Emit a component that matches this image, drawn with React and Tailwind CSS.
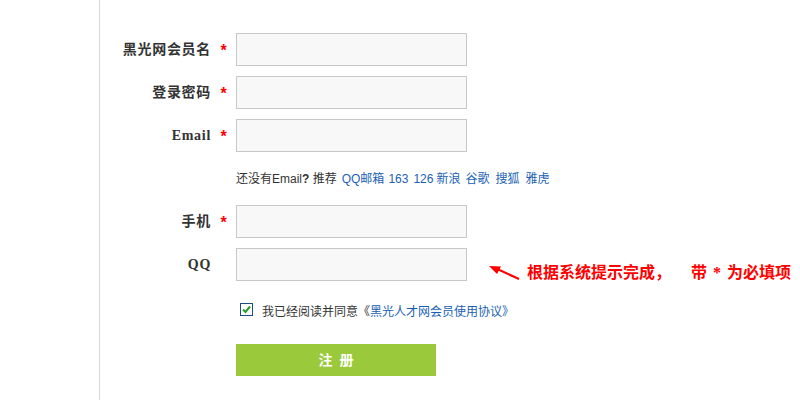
import React from "react";

const labelFont = { fontFamily: '"Liberation Serif", "Noto Sans CJK SC", serif' };

const Row = ({ label, required, children }) => (
  <div className="flex items-center h-[33px]">
    <div
      className="w-[111px] text-right text-[14px] font-bold text-[#333] tracking-[0.7px]"
      style={labelFont}
    >
      {label}
    </div>
    <div className="w-[25px] text-center text-[16px] font-bold text-[#f00] pt-[3px]">
      {required ? "*" : ""}
    </div>
    <input
      type="text"
      className="w-[231px] h-[33px] border border-[#c8c8c8] bg-[#f8f8f8] outline-none"
    />
    {children}
  </div>
);

const links = [
  ["QQ邮箱", "ml-[5px]"],
  ["163", "ml-[4px]"],
  ["126", "ml-[5px]"],
  ["新浪", "ml-[3px]"],
  ["谷歌", "ml-[5px]"],
  ["搜狐", "ml-[6px]"],
  ["雅虎", "ml-[6px]"],
];

export default function App() {
  return (
    <div
      className="w-[800px] h-[400px] bg-white flex overflow-hidden"
      style={{ fontFamily: '"Liberation Sans", "Noto Sans CJK SC", sans-serif' }}
    >
      <div className="w-[100px] h-full border-r border-[#d8d8d8] shrink-0" />
      <div className="flex flex-col pt-[33px]">
        <div className="flex flex-col gap-[10px]">
          <Row label="黑光网会员名" required />
          <Row label="登录密码" required />
          <Row label="Email" required />
        </div>

        <div className="flex items-center h-[53px] pl-[136px] text-[12px] text-[#333]">
          <span>
            还没有Email<b>?</b> 推荐
          </span>
          {links.map(([t, m]) => (
            <a key={t} className={`${m} text-[#1a5fb4]`}>
              {t}
            </a>
          ))}
        </div>

        <div className="flex flex-col gap-[10px]">
          <Row label="手机" required />
          <Row label="QQ">
            <svg width="32" height="16" viewBox="0 0 32 16" className="ml-[22px] mt-[16px]">
              <line x1="6" y1="3" x2="30" y2="14" stroke="#f00" strokeWidth="2.2" />
              <polygon points="0,1 12,1.5 8,9" fill="#f00" />
            </svg>
            <span
              className="ml-[6px] mt-[17px] text-[16px] font-bold text-[#f00] whitespace-nowrap"
              style={labelFont}
            >
              根据系统提示完成，
              <span className="ml-[20px]">带</span>
              <span className="ml-[6px]">*</span>
              <span className="ml-[6px]">为必填项</span>
            </span>
          </Row>
        </div>

        <div className="flex items-center h-[12px] mt-[22px] pl-[140px] text-[12px] text-[#333]">
          <span className="w-[13px] h-[13px] border border-[#1c4f80] bg-white flex items-center justify-center">
            <svg width="9" height="9" viewBox="0 0 9 9">
              <path d="M1 4.5 L3.5 7 L8 1.5" stroke="#2a9d2a" strokeWidth="2" fill="none" />
            </svg>
          </span>
          <span className="ml-[9px] pt-[6px]">
            我已经阅读并同意《<a className="text-[#1a5fb4]">黑光人才网会员使用协议》</a>
          </span>
        </div>

        <div className="pl-[136px] mt-[29px]">
          <button className="w-[200px] h-[32px] bg-[#9aca3c] text-white text-[14px] font-bold" style={labelFont}>
            注&nbsp;&nbsp;册
          </button>
        </div>
      </div>
    </div>
  );
}
